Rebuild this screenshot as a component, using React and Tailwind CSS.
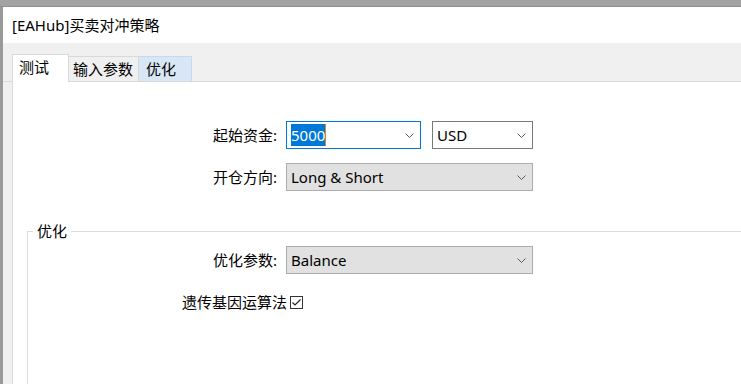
const font = { fontFamily: '"Noto Sans", "Noto Sans CJK SC", sans-serif' }

function Chevron() {
  return (
    <svg width="9" height="5" viewBox="0 0 9 5" className="shrink-0">
      <path d="M0.5 0.5 L4.5 4.5 L8.5 0.5" fill="none" stroke="#5a5a5a" strokeWidth="1" />
    </svg>
  )
}

function Combo({ width, children, variant = 'gray' }) {
  const styles = {
    gray: 'bg-[#e1e1e1] border-[#adadad]',
    white: 'bg-white border-[#7a7a7a]',
    focus: 'bg-white border-[#0078d7]',
  }
  return (
    <div
      className={`h-[28px] border flex items-center justify-between pl-[4px] pr-[6px] ${styles[variant]}`}
      style={{ width }}
    >
      <div className="flex items-center">{children}</div>
      <Chevron />
    </div>
  )
}

function Row({ label, labelWidth, children }) {
  return (
    <div className="flex items-center h-[28px]">
      <div className="text-right shrink-0" style={{ width: labelWidth }}>
        {label}
      </div>
      <div className="ml-[9px]">{children}</div>
    </div>
  )
}

export default function App() {
  return (
    <div className="w-[741px] h-[384px] overflow-hidden flex flex-col text-[15px] text-black bg-white" style={font}>
      <div className="h-[7px] shrink-0 bg-[#a3a3a3] border-b border-[#8f8f8f]" />
      <div className="flex flex-1 min-h-0">
        <div className="w-[3px] shrink-0 bg-[#999999]" />
        <div className="flex-1 flex flex-col min-w-0">
          <div className="h-[36px] shrink-0 flex items-center pl-[9px] bg-white">[EAHub]买卖对冲策略</div>

          <div className="h-[39px] shrink-0 bg-[#f0f0f0] border-b border-[#d9d9d9] flex items-end pl-[9px]">
            <div className="w-[57px] h-[28px] -mb-px bg-white border border-b-0 border-[#d9d9d9] flex items-center pl-[6px] pb-[2px]">
              测试
            </div>
            <div className="w-[70px] h-[25px] bg-[#f0f0f0] border-t border-r border-[#d9d9d9] flex items-center pl-[4px]">
              输入参数
            </div>
            <div className="w-[53px] h-[25px] bg-[#d8e6f6] border-t border-r border-[#c4daf2] flex items-center pl-[7px]">
              优化
            </div>
          </div>

          <div className="flex flex-1 min-h-0">
            <div className="w-[9px] shrink-0 bg-[#f0f0f0]" />
            <div className="flex-1 flex flex-col bg-white border-l border-[#d9d9d9] pt-[39px] overflow-hidden">
              <div className="flex flex-col gap-[14px]">
                <Row label="起始资金:" labelWidth={264}>
                  <div className="flex items-center gap-[11px]">
                    <Combo width={135} variant="focus">
                      <span className="bg-[#0078d7] text-white leading-[22px]">5000</span>
                      <span className="w-px h-[22px] bg-[#e8820c]" />
                    </Combo>
                    <Combo width={101} variant="white">
                      USD
                    </Combo>
                  </div>
                </Row>
                <Row label="开仓方向:" labelWidth={264}>
                  <Combo width={247}>Long &amp; Short</Combo>
                </Row>
              </div>

              <div className="relative flex-1 ml-[14px] mt-[40px] border-t border-l border-[#dcdcdc] pt-[14px] flex flex-col gap-[14px]">
                <span className="absolute -top-[11px] left-[5px] bg-white px-[4px] leading-[20px]">优化</span>
                <Row label="优化参数:" labelWidth={249}>
                  <Combo width={247}>Balance</Combo>
                </Row>
                <div className="flex items-center h-[28px]">
                  <div className="w-[259px] shrink-0 text-right">遗传基因运算法</div>
                  <div className="ml-[3px] w-[13px] h-[13px] border border-[#333333] bg-white flex items-center justify-center">
                    <svg width="11" height="11" viewBox="0 0 11 11">
                      <path d="M1.5 5.5 L4 8 L9.5 2.5" fill="none" stroke="#222222" strokeWidth="1.2" />
                    </svg>
                  </div>
                </div>
              </div>
            </div>
          </div>
        </div>
      </div>
    </div>
  )
}
